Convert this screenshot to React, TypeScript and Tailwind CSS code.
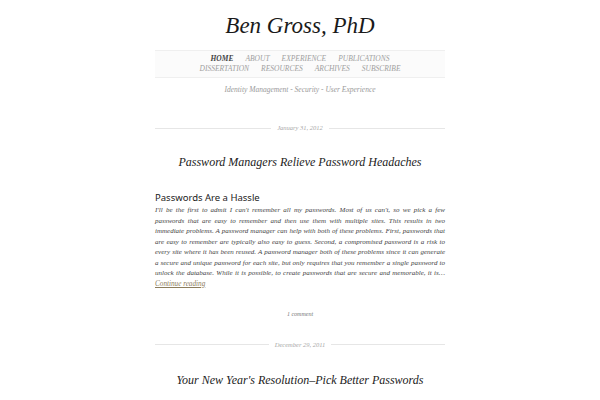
const serif = { fontFamily: '"Liberation Serif", "DejaVu Serif", serif' };

function DateRule({ date }: { date: string }) {
  return (
    <div className="flex items-center gap-[6px]">
      <div className="h-px flex-1 bg-[#e6e6e6]" />
      <span className="text-[6.5px] italic text-[#a8a8a8]">{date}</span>
      <div className="h-px flex-1 bg-[#e6e6e6]" />
    </div>
  );
}

const navTop = ["HOME", "ABOUT", "EXPERIENCE", "PUBLICATIONS"];
const navBottom = ["DISSERTATION", "RESOURCES", "ARCHIVES", "SUBSCRIBE"];

// excerpt is set line by line so the wrap matches the printed column
const excerpt = [
  "I'll be the first to admit I can't remember all my passwords. Most of us can't, so we pick a few",
  "passwords that are easy to remember and then use them with multiple sites. This results in two",
  "immediate problems. A password manager can help with both of these problems. First, passwords that",
  "are easy to remember are typically also easy to guess. Second, a compromised password is a risk to",
  "every site where it has been reused. A password manager both of these problems since it can generate",
  "a secure and unique password for each site, but only requires that you remember a single password to",
  "unlock the database. While it is possible, to create passwords that are secure and memorable, it is…",
];

export default function App() {
  return (
    <div className="min-h-[400px] w-[600px] overflow-hidden bg-white" style={serif}>
      <div className="mx-auto w-[290px]">
        <h1 className="pt-[11px] text-center text-[23px] leading-[30px] italic text-[#1a1a1a]">Ben Gross, PhD</h1>

        <nav className="mt-[9px] border-y border-[#efefef] bg-[#fbfbfb] py-[3px] text-[7.5px] italic leading-[10px] text-[#a0a0a0]">
          <div className="flex justify-center gap-[12px]">
            {navTop.map((n) => (
              <span key={n} className={n === "HOME" ? "font-bold text-[#444]" : ""}>
                {n}
              </span>
            ))}
          </div>
          <div className="flex justify-center gap-[12px]">
            {navBottom.map((n) => (
              <span key={n}>{n}</span>
            ))}
          </div>
        </nav>

        <p className="mt-[6px] text-center text-[7.5px] italic text-[#9a9a9a]">
          Identity Management - Security - User Experience
        </p>

        <div className="mt-[28px]">
          <DateRule date="January 31, 2012" />
        </div>

        <h2 className="mt-[20px] text-center text-[12px] italic text-[#222]">
          Password Managers Relieve Password Headaches
        </h2>

        <h3
          className="mt-[20px] text-[9.5px] leading-[14px] text-[#222]"
          style={{ fontFamily: '"Noto Sans", "Open Sans", sans-serif' }}
        >
          Passwords Are a Hassle
        </h3>
        <div className="text-[7px] italic leading-[10.5px] text-[#444]">
          {excerpt.map((line, i) => (
            <p key={i} className="text-justify [text-align-last:justify]">
              {line}
            </p>
          ))}
        </div>
        <a className="block text-[7.2px] italic leading-[11px] text-[#8c7d5c] underline">Continue reading</a>

        <p className="mt-[20px] text-center text-[6px] italic text-[#777]">1 comment</p>

        <div className="mt-[21px]">
          <DateRule date="December 29, 2011" />
        </div>

        <h2 className="mt-[22px] text-center text-[12px] italic text-[#222]">
          Your New Year's Resolution–Pick Better Passwords
        </h2>
      </div>
    </div>
  );
}
